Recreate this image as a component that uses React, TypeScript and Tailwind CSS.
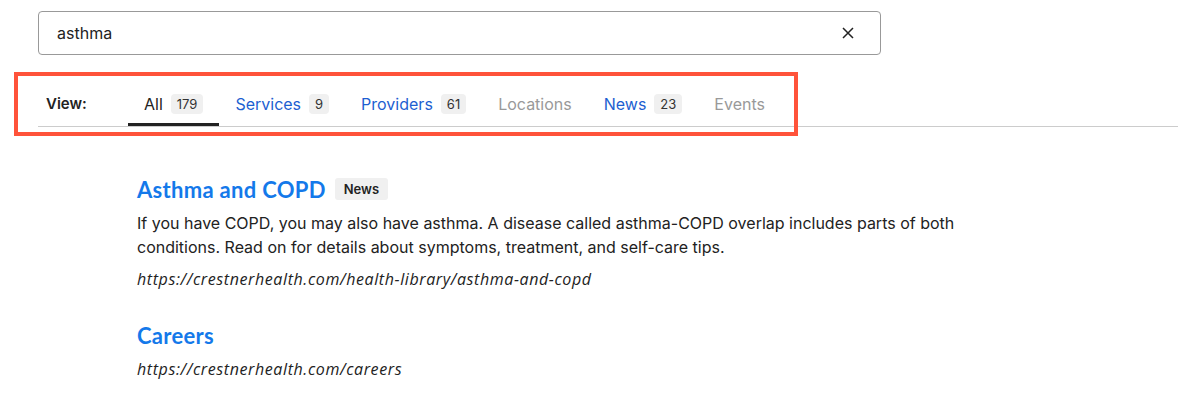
const tabs = [
  { label: "All", count: "179", state: "active" },
  { label: "Services", count: "9", state: "link" },
  { label: "Providers", count: "61", state: "link" },
  { label: "Locations", count: null, state: "off" },
  { label: "News", count: "23", state: "link" },
  { label: "Events", count: null, state: "off" },
];

function Tab({ label, count, state }: { label: string; count: string | null; state: string }) {
  const color =
    state === "active" ? "text-[#222]" : state === "link" ? "text-[#1d5fd1]" : "text-[#999]";
  const underline = state === "active" ? "border-[#222]" : "border-transparent";
  return (
    <div className={`flex items-center gap-2 px-4 pt-2 pb-[7px] border-b-[3px] ${underline}`}>
      <span className={`text-base leading-6 ${color}`}>{label}</span>
      {count && (
        <span className="bg-[#f0f0f0] text-[#333] text-[13px] leading-5 px-1.5 rounded-sm">
          {count}
        </span>
      )}
    </div>
  );
}

export default function App() {
  return (
    <div className="relative w-[1197px] h-[397px] bg-white overflow-hidden font-['Inter',sans-serif]">
      <div className="pl-[38px] pt-[11px] w-[1178px]">
        {/* Search box */}
        <div className="w-[843px] h-[44px] border border-[#999] rounded-[4px] flex items-center justify-between pl-[18px] pr-[26px]">
          <span className="text-base text-[#222]">asthma</span>
          <svg width="12" height="12" viewBox="0 0 12 12" className="text-[#222]">
            <path d="M1 1L11 11M11 1L1 11" stroke="currentColor" strokeWidth="1.5" />
          </svg>
        </div>

        {/* View tabs */}
        <div className="mt-[29px] flex items-end border-b border-[#ccc]">
          <div className="w-[90px] pl-2 pt-2 pb-[10px] text-[15px] leading-6 font-semibold text-[#222]">
            View:
          </div>
          {tabs.map((t) => (
            <Tab key={t.label} {...t} />
          ))}
        </div>

        {/* Results */}
        <div className="pl-[99px] mt-[48px] flex flex-col">
          <div className="flex items-center gap-[9px] h-7">
            <span className="font-['Lato',sans-serif] font-bold text-[22px] tracking-[0.3px] text-[#1479ea]">
              Asthma and COPD
            </span>
            <span className="bg-[#f0f0f0] text-[#222] text-[13px] font-semibold leading-[22px] px-[9px] rounded-[3px]">
              News
            </span>
          </div>
          <p className="mt-2 max-w-[840px] text-base leading-6 text-[#222]">
            If you have COPD, you may also have asthma. A disease called asthma-COPD overlap includes parts of both
            conditions. Read on for details about symptoms, treatment, and self-care tips.
          </p>
          <p className="mt-2 font-['Open_Sans',sans-serif] italic text-base leading-6 tracking-[0.6px] text-[#222]">
            https://crestnerhealth.com/health-library/asthma-and-copd
          </p>

          <div className="mt-[30px] h-7 flex items-center">
            <span className="font-['Lato',sans-serif] font-bold text-[22px] tracking-[0.3px] text-[#1479ea]">
              Careers
            </span>
          </div>
          <p className="mt-2 font-['Open_Sans',sans-serif] italic text-base leading-6 tracking-[0.6px] text-[#222]">
            https://crestnerhealth.com/careers
          </p>
        </div>
      </div>

      {/* Annotation highlight */}
      <div className="absolute left-[14px] top-[72px] w-[784px] h-[64px] border-[4px] border-[#ff533a] pointer-events-none" />
    </div>
  );
}
